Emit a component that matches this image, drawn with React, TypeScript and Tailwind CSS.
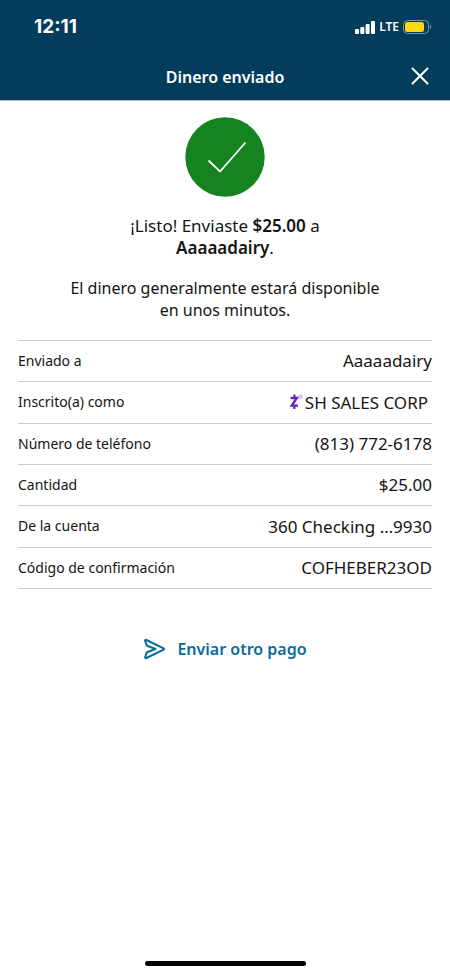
import type { ReactNode } from "react";

function ZelleMark() {
  return (
    <svg viewBox="0 0 16 18" className="h-[18px] w-4" role="img" aria-label="Zelle">
      <g fill="none" stroke="#6a24b8" strokeWidth="2.4">
        <path d="M2.6 5H8.8L3.8 12.6H10" strokeLinejoin="miter" />
        <path d="M6.4 1.6V4.6M6.4 13V16" strokeWidth="2.2" />
      </g>
      <g fill="none" stroke="#b391dc" strokeWidth="0.7">
        <circle cx="12.6" cy="3.6" r="1.8" />
        <path d="M12.1 4.7V2.7H12.8C13.5 2.7 13.5 3.7 12.8 3.7H12.1M12.8 3.7L13.3 4.7" strokeWidth="0.5" />
      </g>
    </svg>
  );
}

const rows: { label: string; value: ReactNode }[] = [
  { label: "Enviado a", value: "Aaaaadairy" },
  {
    label: "Inscrito(a) como",
    value: (
      <span className="flex items-center justify-end gap-px pr-1">
        <ZelleMark />
        SH SALES CORP
      </span>
    ),
  },
  { label: "Número de teléfono", value: "(813) 772-6178" },
  { label: "Cantidad", value: "$25.00" },
  { label: "De la cuenta", value: "360 Checking …9930" },
  { label: "Código de confirmación", value: "COFHEBER23OD" },
];

function StatusBar() {
  return (
    <div className="flex h-[54px] items-center justify-between pr-[18px] pl-[34px]">
      <span className="font-['Inter',sans-serif] text-[19px] font-bold">12:11</span>
      <div className="flex items-center gap-1">
        <svg viewBox="0 0 20 13" className="h-[13px] w-5" fill="#fff" aria-hidden="true">
          <rect x="0" y="8" width="4" height="5" rx="1" />
          <rect x="5.3" y="6" width="4" height="7" rx="1" />
          <rect x="10.6" y="3" width="4" height="10" rx="1" />
          <rect x="16" y="0" width="4" height="13" rx="1" />
        </svg>
        <span className="font-['Noto_Sans',sans-serif] text-xs font-semibold">LTE</span>
        <svg viewBox="0 0 29 14" className="h-[14px] w-[29px]" aria-hidden="true">
          <rect x="0.5" y="0.5" width="25" height="13" rx="4" fill="none" stroke="#7695a9" />
          <rect x="2" y="2" width="19" height="10" rx="2.5" fill="#fbd914" />
          <path d="M27 5C28.6 5.4 28.6 8.6 27 9Z" fill="#7695a9" />
        </svg>
      </div>
    </div>
  );
}

export default function App() {
  return (
    <div className="flex min-h-screen flex-col bg-white font-['Noto_Sans',sans-serif] text-[#141414]">
      <header className="border-b border-[#a3bdcf] bg-[#033d5b] text-white">
        <StatusBar />
        <div className="grid h-[46px] grid-cols-[1fr_auto_1fr] items-center px-5">
          <h1 className="col-start-2 text-base font-semibold">Dinero enviado</h1>
          <button type="button" aria-label="Cerrar" className="justify-self-end">
            <svg viewBox="0 0 20 20" className="size-5" fill="none" stroke="#fff" strokeWidth="2" strokeLinecap="round">
              <path d="M2.5 1.5L17.5 16.5M17.5 1.5L2.5 16.5" />
            </svg>
          </button>
        </div>
      </header>

      <main className="flex flex-col items-center px-[18px] pt-4">
        <svg viewBox="0 0 80 80" className="size-20" role="img" aria-label="Completado">
          <circle cx="40" cy="40" r="39.7" fill="#148320" />
          <path d="M23.5 43.5L35 54.5L60.5 25.5" fill="none" stroke="#fff" strokeWidth="1.8" />
        </svg>
        <p className="mt-[18px] text-center text-[17px] leading-[22px]">
          ¡Listo! Enviaste <strong className="font-semibold">$25.00</strong> a
          <br />
          <strong className="font-semibold">Aaaaadairy</strong>.
        </p>
        <p className="mt-[18px] text-center text-base leading-[22px]">
          El dinero generalmente estará disponible
          <br />
          en unos minutos.
        </p>

        <table className="mt-[19px] h-[249px] w-full border-collapse">
          <tbody>
            {rows.map((row) => (
              <tr key={row.label} className="border-y border-[#cccccc]">
                <th scope="row" className="p-0 text-left text-sm font-normal">
                  {row.label}
                </th>
                <td className="p-0 text-right text-[17px]">{row.value}</td>
              </tr>
            ))}
          </tbody>
        </table>

        <button type="button" className="mt-12 flex items-center gap-2.5 text-base font-semibold text-[#0b6b9c]">
          <svg viewBox="0 0 24 22" className="h-[22px] w-6" fill="none" stroke="#0b6b9c" strokeWidth="2" strokeLinejoin="round" strokeLinecap="round">
            <path d="M2.2 3.2C1.8 2.2 2.6 1.6 3.5 2L20.6 10.3C21.3 10.7 21.3 11.3 20.6 11.7L3.5 20C2.6 20.4 1.8 19.8 2.2 18.8L4 14.2L12.6 11L4 7.8Z" />
          </svg>
          Enviar otro pago
        </button>
      </main>

      <div className="mx-auto mt-auto mb-[9px] h-[5px] w-[161px] rounded-full bg-black" />
    </div>
  );
}
